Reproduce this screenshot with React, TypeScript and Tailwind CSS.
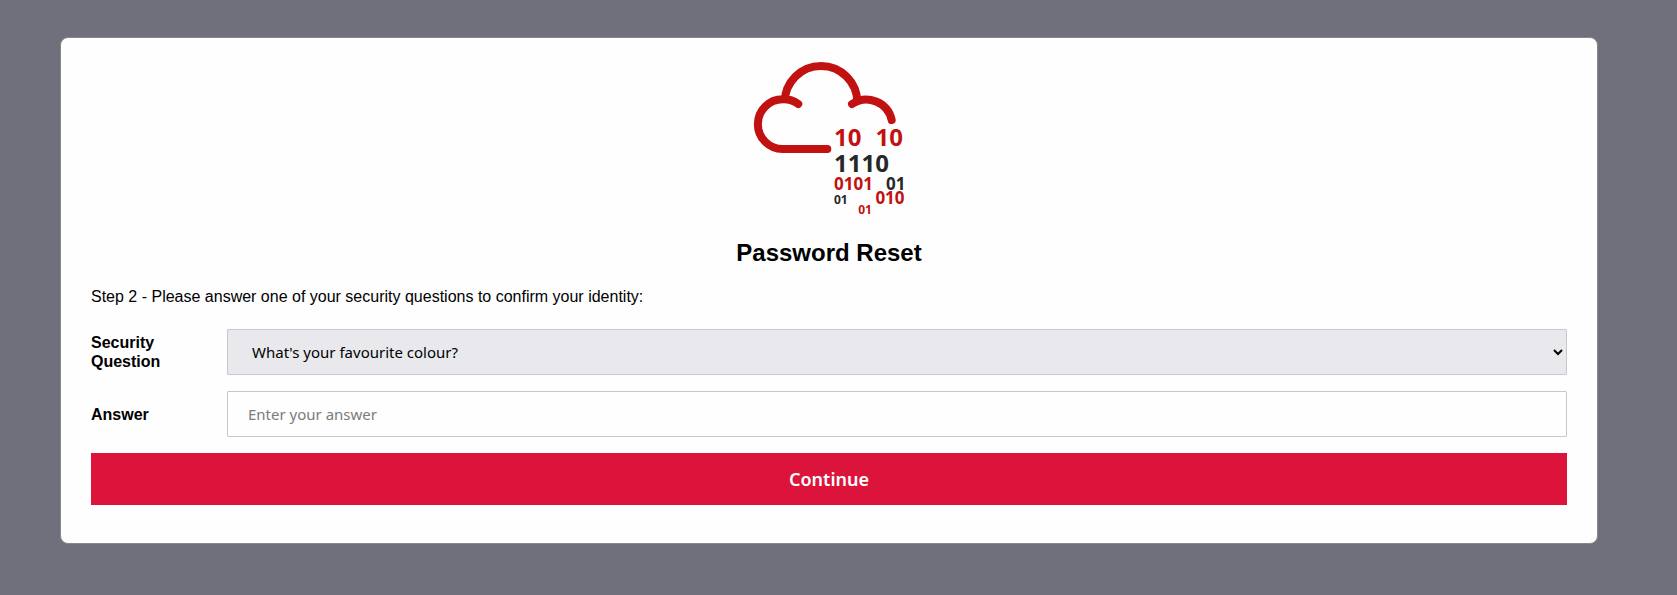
import React from 'react';

function CloudLogo() {
  return (
    <svg
      className="mx-auto size-40"
      viewBox="0 0 160 160"
      role="img"
      aria-label="Cloud logo"
      fontFamily='"Noto Sans", sans-serif'
      fontWeight="700"
      fill="#c11111"
    >
      <g fill="none" stroke="#c11111" strokeWidth="8" strokeLinecap="round">
        <path strokeLinecap="butt" d="M35.7 43.3A36.3 36.3 0 0 1 108.3 43.3" />
        <path d="M49.3 45A25 25 0 0 0 33.7 40.3A24.85 24.85 0 0 0 33.7 90H78.3" />
        <path d="M103 45A26 26 0 0 1 142.7 61" />
      </g>
      <text x="85" y="87.3" fontSize="24">10</text>
      <text x="126.6" y="87.3" fontSize="24">10</text>
      <text x="85" y="113" fontSize="24" fill="#262828">1110</text>
      <text x="85" y="131.2" fontSize="17">0101</text>
      <text x="137" y="131.2" fontSize="17" fill="#262828">01</text>
      <text x="85" y="145" fontSize="12" fill="#262828">01</text>
      <text x="126.4" y="145" fontSize="17">010</text>
      <text x="109.2" y="155.3" fontSize="12">01</text>
    </svg>
  );
}

const fieldClass =
  'h-[46px] w-full rounded-[1px] border border-[#c8c8cb] px-5 font-["Noto_Sans",sans-serif] text-[15px]';

export default function App() {
  return (
    <div className='min-h-screen bg-[#70707c] pt-[37px] pr-[79px] pb-12 pl-15 font-["Liberation_Sans",Arial,sans-serif] text-base text-black'>
      <main className="rounded-lg border border-[#888888] bg-[#fefefe] px-[30px] pt-[21px] pb-[38px]">
        <CloudLogo />
        <h1 className="mt-[18px] text-center text-2xl font-bold">Password Reset</h1>
        <p className="mt-4">
          Step 2 - Please answer one of your security questions to confirm your identity:
        </p>
        <form className="mt-5 flex flex-col gap-4" onSubmit={(e) => e.preventDefault()}>
          <div className="flex items-center">
            <label htmlFor="question" className="w-34 shrink-0 pr-10 leading-[19px] font-bold">
              Security Question
            </label>
            <select id="question" className={`${fieldClass} bg-[#e9e9ed]`}>
              <option>What's your favourite colour?</option>
            </select>
          </div>
          <div className="flex items-center">
            <label htmlFor="answer" className="w-34 shrink-0 leading-[19px] font-bold">
              Answer
            </label>
            <input
              id="answer"
              type="text"
              placeholder="Enter your answer"
              className={`${fieldClass} bg-[#fefefe] placeholder:text-[#7b7b7b]`}
            />
          </div>
          <button
            type="submit"
            className='h-[52px] w-full bg-[#dc143c] font-["Noto_Sans",sans-serif] text-lg font-semibold text-white'
          >
            Continue
          </button>
        </form>
      </main>
    </div>
  );
}
